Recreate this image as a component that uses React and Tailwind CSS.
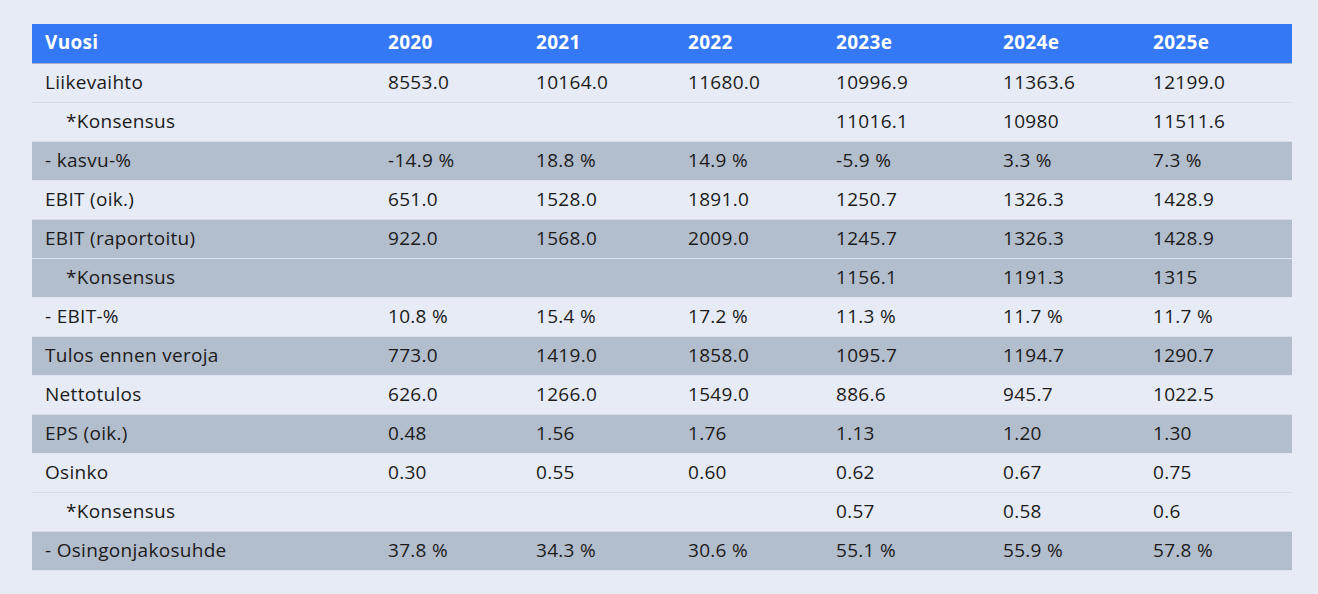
import React from 'react';

const cols = ['2020', '2021', '2022', '2023e', '2024e', '2025e'];
const widths = ['w-[343px]', 'w-[148px]', 'w-[152px]', 'w-[148px]', 'w-[167px]', 'w-[150px]', 'w-[152px]'];

const rows = [
  { label: 'Liikevaihto', values: ['8553.0', '10164.0', '11680.0', '10996.9', '11363.6', '12199.0'] },
  { label: '*Konsensus', indent: true, values: ['', '', '', '11016.1', '10980', '11511.6'] },
  { label: '- kasvu-%', grey: true, values: ['-14.9 %', '18.8 %', '14.9 %', '-5.9 %', '3.3 %', '7.3 %'] },
  { label: 'EBIT (oik.)', values: ['651.0', '1528.0', '1891.0', '1250.7', '1326.3', '1428.9'] },
  { label: 'EBIT (raportoitu)', grey: true, values: ['922.0', '1568.0', '2009.0', '1245.7', '1326.3', '1428.9'] },
  { label: '*Konsensus', indent: true, grey: true, values: ['', '', '', '1156.1', '1191.3', '1315'] },
  { label: '- EBIT-%', values: ['10.8 %', '15.4 %', '17.2 %', '11.3 %', '11.7 %', '11.7 %'] },
  { label: 'Tulos ennen veroja', grey: true, values: ['773.0', '1419.0', '1858.0', '1095.7', '1194.7', '1290.7'] },
  { label: 'Nettotulos', values: ['626.0', '1266.0', '1549.0', '886.6', '945.7', '1022.5'] },
  { label: 'EPS (oik.)', grey: true, values: ['0.48', '1.56', '1.76', '1.13', '1.20', '1.30'] },
  { label: 'Osinko', values: ['0.30', '0.55', '0.60', '0.62', '0.67', '0.75'] },
  { label: '*Konsensus', indent: true, values: ['', '', '', '0.57', '0.58', '0.6'] },
  { label: '- Osingonjakosuhde', grey: true, values: ['37.8 %', '34.3 %', '30.6 %', '55.1 %', '55.9 %', '57.8 %'] },
];

export default function App() {
  return (
    <div className="min-h-[594px] w-full bg-[#e6ebf5] pt-[24px] px-[32px] font-['Open_Sans','Lato',sans-serif] text-[19px] leading-[24px] tracking-[0.3px] text-[#1b1b1b]">
      <table className="w-[1260px] border-collapse table-fixed">
        <thead>
          <tr className="h-[39px] bg-[#3478f6] border-b border-[#a9b3c2] text-white">
            <th className={`${widths[0]} pl-[13px] pb-[2px] text-left font-bold`}>Vuosi</th>
            {cols.map((c, i) => (
              <th key={c} className={`${widths[i + 1]} pl-[13px] pb-[2px] text-left font-bold`}>{c}</th>
            ))}
          </tr>
        </thead>
        <tbody>
          {rows.map((r, idx) => (
            <tr
              key={idx}
              className={
                r.grey
                  ? 'h-[39px] bg-[#b3becd] border-b border-[#dfe4ee]'
                  : 'h-[39px] bg-[#e6ebf5] border-b border-[#d9dee6]'
              }
            >
              <td className={r.indent ? 'pl-[34px] pb-[2px]' : 'pl-[13px] pb-[2px]'}>{r.label}</td>
              {r.values.map((v, i) => (
                <td key={i} className="pl-[13px] pb-[2px]">{v}</td>
              ))}
            </tr>
          ))}
        </tbody>
      </table>
    </div>
  );
}
